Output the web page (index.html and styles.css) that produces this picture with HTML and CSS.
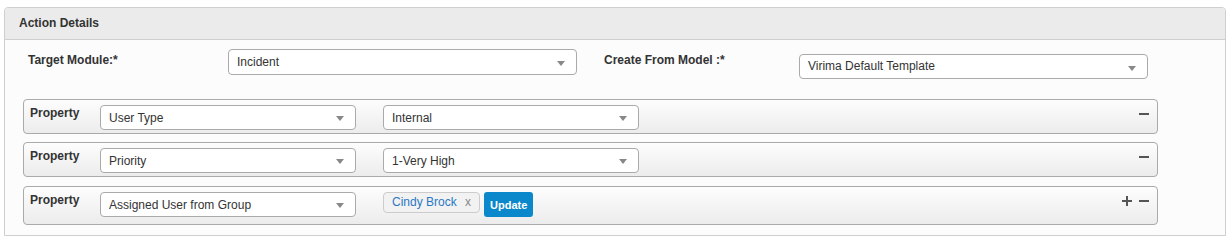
FILE: index.html
```html
<!DOCTYPE html>
<html lang="en">
<head>
    <meta charset="UTF-8">
    <meta name="viewport" content="width=device-width, initial-scale=1.0">
    <title>Action Details</title>
    <link rel="stylesheet" href="styles.css">
</head>
<body>
    <div class="panel">
        <div class="panel-heading">Action Details</div>
        <div class="panel-body">
            <div class="field-row">
                <label class="field-label">Target Module:*</label>
                <div class="select select-wide"><span>Incident</span><i class="caret"></i></div>
                <label class="field-label model-label">Create From Model :*</label>
                <div class="select select-wide model-select"><span>Virima Default Template</span><i class="caret"></i></div>
            </div>

            <div class="prop-list">
                <div class="prop">
                    <span class="prop-label">Property</span>
                    <div class="select"><span>User Type</span><i class="caret"></i></div>
                    <div class="select prop-value"><span>Internal</span><i class="caret"></i></div>
                    <div class="prop-actions"><span class="icon-minus"></span></div>
                </div>
                <div class="prop">
                    <span class="prop-label">Property</span>
                    <div class="select"><span>Priority</span><i class="caret"></i></div>
                    <div class="select prop-value"><span>1-Very High</span><i class="caret"></i></div>
                    <div class="prop-actions"><span class="icon-minus"></span></div>
                </div>
                <div class="prop prop-tall">
                    <span class="prop-label">Property</span>
                    <div class="select"><span>Assigned User from Group</span><i class="caret"></i></div>
                    <div class="value-box prop-value">
                        <span class="chip">Cindy Brock <span class="chip-x">x</span></span>
                        <button class="btn-update">Update</button>
                    </div>
                    <div class="prop-actions"><span class="icon-plus"></span><span class="icon-minus"></span></div>
                </div>
            </div>
        </div>
    </div>
</body>
</html>
```

FILE: styles.css
```css
body {
    margin: 0;
    padding: 7px 6px 0 4px;
    font-family: "Liberation Sans", Arial, sans-serif;
    font-size: 12px;
    color: #333;
    background: #fff;
}
.panel {
    border: 1px solid #cfcfcf;
    border-radius: 4px 4px 0 0;
    background: #fcfcfc;
    height: 229px;
    box-sizing: border-box;
}
.panel-heading {
    height: 31px;
    line-height: 30px;
    padding-left: 14px;
    background: #ebebeb;
    border-bottom: 1px solid #cfcfcf;
    border-radius: 4px 4px 0 0;
    font-weight: bold;
}
.panel-body {
    padding: 9px 0 0 18px;
}
.field-row {
    display: flex;
    align-items: flex-start;
    padding-left: 5px;
}
.field-label {
    width: 200px;
    font-weight: bold;
    line-height: 14px;
    margin-top: 4px;
}
.model-label {
    margin-left: 27px;
    width: 195px;
}
.select {
    position: relative;
    flex-shrink: 0;
    width: 256px;
    height: 26px;
    box-sizing: border-box;
    border: 1px solid #aaa;
    border-radius: 4px;
    background: #fff;
    padding: 0 24px 0 8px;
    line-height: 25px;
    color: #333;
    white-space: nowrap;
}
.select-wide {
    width: 349px;
}
.model-select {
    margin-top: 5px;
    height: 25px;
    line-height: 23px;
}
.caret {
    position: absolute;
    right: 11px;
    top: 11px;
    border-left: 4px solid transparent;
    border-right: 4px solid transparent;
    border-top: 5px solid #888;
}
.prop-list {
    margin-top: 20px;
    width: 1135px;
    display: flex;
    flex-direction: column;
    gap: 8px;
}
.prop {
    display: flex;
    align-items: flex-start;
    padding: 5px 8px 3px 6px;
    border: 1px solid #aaa;
    border-radius: 4px;
    background: linear-gradient(#fdfdfd, #ececec);
}
.prop .select {
    height: 25px;
    line-height: 24px;
}
.prop .caret {
    top: 10px;
}
.prop-tall {
    margin-top: 1px;
    padding-bottom: 7px;
}
.prop-label {
    flex-shrink: 0;
    width: 70px;
    font-weight: bold;
    line-height: 14px;
    margin-top: 1px;
    white-space: nowrap;
}
.prop-value {
    margin-left: 27px;
}
.value-box {
    display: flex;
    align-items: flex-start;
    gap: 4px;
}
.chip {
    height: 21px;
    line-height: 19px;
    box-sizing: border-box;
    border: 1px solid #ccc;
    border-radius: 4px;
    background: #f2f2f2;
    padding: 0 8px;
    color: #2a78c4;
}
.chip-x {
    color: #888;
    margin-left: 5px;
}
.btn-update {
    height: 25px;
    padding: 0 6px;
    border: none;
    border-radius: 3px;
    background: #0a88cb;
    color: #fff;
    font-family: "Liberation Sans", Arial, sans-serif;
    font-size: 11px;
    font-weight: bold;
}
.prop-actions {
    margin-left: auto;
    display: flex;
    gap: 7px;
    margin-top: 4px;
    height: 10px;
}
.icon-minus,
.icon-plus {
    position: relative;
    width: 10px;
    height: 10px;
}
.icon-minus::before,
.icon-plus::before,
.icon-plus::after {
    content: "";
    position: absolute;
    background: #555;
}
.icon-minus::before,
.icon-plus::before {
    left: 0;
    top: 4px;
    width: 10px;
    height: 2px;
}
.icon-plus::after {
    left: 4px;
    top: 0;
    width: 2px;
    height: 10px;
}
```
